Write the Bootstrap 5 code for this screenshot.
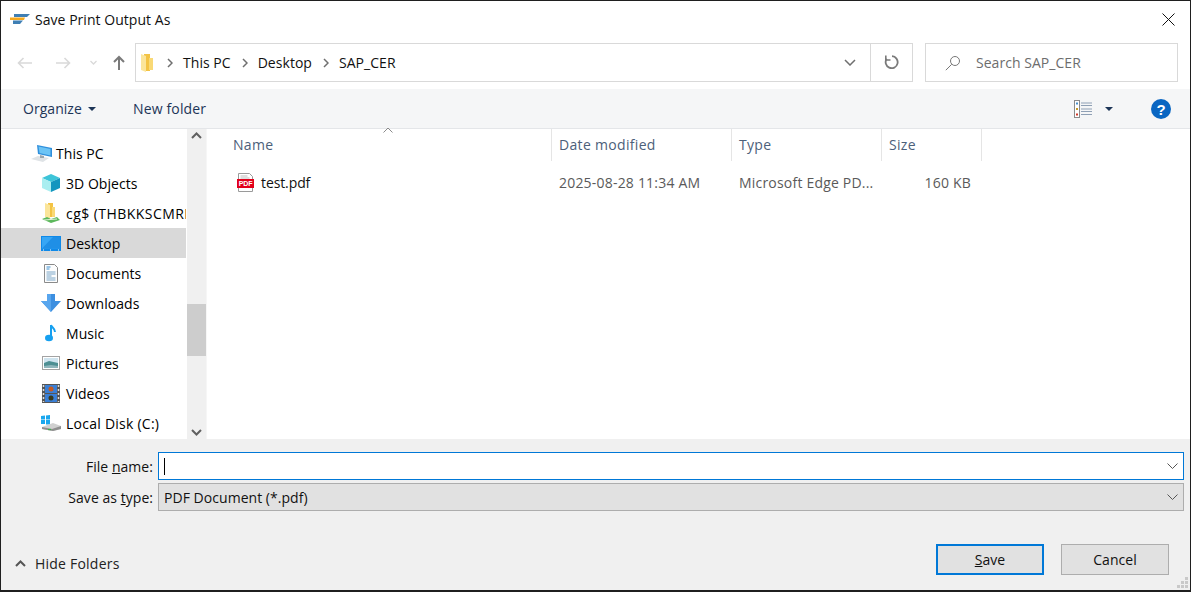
<!doctype html>
<html lang="en">
<head>
<meta charset="utf-8">
<title>Save Print Output As</title>
<link href="https://cdn.jsdelivr.net/npm/bootstrap@5.3.0/dist/css/bootstrap.min.css" rel="stylesheet">
<style>
html,body{height:100%;margin:0;background:#fff;overflow:hidden}
body{font-family:"Open Sans","Noto Sans",sans-serif;font-size:14px;color:#000;letter-spacing:.04px}
.dlg{width:1191px;height:592px;border:1px solid #1f1f1f;border-bottom-width:2px;display:flex;flex-direction:column;overflow:hidden}
.tbar{height:36px;padding-left:9px;flex:none}
.tbar-title{margin-left:5px;font-size:14px;color:#111}
.xbtn{margin-left:auto;margin-right:15px}
.navrow{height:52px;flex:none;padding-top:6px;align-items:flex-start}
.navarrows{width:134px;height:39px;padding-left:16px;flex:none}
.nav-fwd{margin-left:24px}
.nav-dd{margin-left:19px}
.nav-up{margin-left:16px}
.addr{width:778px;height:39px;border:1px solid #d9d9d9;flex:none}
.addr-folder{margin-left:5px;margin-right:14px}
.addr-chev{margin-right:10px}
.addr-txt{margin-right:11px;color:#111}
.addr-end{width:42px;height:37px;border-left:1px solid #d9d9d9;justify-content:center;flex:none}
.addr-dd{width:41px;justify-content:center;flex:none}
.srch{width:253px;height:39px;border:1px solid #d9d9d9;margin-left:12px;padding-left:19px;color:#6d6d6d;flex:none}
.srch span{margin-left:15px}
.cmd{height:40px;flex:none;background:#f5f6f7;border-bottom:1px solid #e4e6e9;padding-left:22px;color:#1d3557}
.cmd-org{width:75px}
.cmd-org i{margin-left:2px}
.cmd-new{margin-left:35px;letter-spacing:.15px}
.cmd-right{margin-left:auto;padding-right:19px}
.view-caret{margin-left:13px;margin-right:38px}
.caret-d{width:0;height:0;border-left:4px solid transparent;border-right:4px solid transparent;border-top:4px solid #1d3557;display:inline-block}
.main{flex:1 1 auto;min-height:0}
.tree{width:185px;margin-right:1px;flex:none;overflow:hidden;padding-top:9px}
.trow{height:30px;padding-left:40px;white-space:nowrap;overflow:hidden}
.trow svg{flex:none;margin-right:5px}
.trow.pc{padding-left:30px}
.trow.pc svg{margin-right:4px}
.trow.sel{background:#d9d9d9}
.wide-txt{letter-spacing:.45px}
.mid-txt{letter-spacing:.25px}
.sbar{width:20px;flex:none;background:#f0f0f0;position:relative;flex-direction:column;justify-content:space-between;padding:3px 0 3px;border-right:1px solid #f6f6f6}
.sthumb{position:absolute;left:0;top:175px;width:19px;height:52px;background:#cdcdcd}
.list{flex:1 1 auto;min-width:0;padding-left:1px}
.lhead{height:32px;color:#4c607a;position:relative;letter-spacing:.32px}
.lcell{height:32px;padding-left:7px;padding-bottom:2px;border-right:1px solid #e5e5e5;flex:none}
.c1{width:344px;padding-left:25px}.c2{width:180px}.c3{width:150px}.c4{width:100px}
.sortmark{position:absolute;left:175px;top:-2px}
.lrow{height:42px;color:#5a5a5a;letter-spacing:.2px}
.lrow .c1,.lrow .c2,.lrow .c3,.lrow .c4{border:0;flex:none;height:42px}
.lrow .c1{padding-left:29px;color:#111;letter-spacing:-.1px}
.lrow .c1 svg{margin-right:7px}
.lrow .c2,.lrow .c3{padding-left:7px}
.lrow .c4{padding:0 11px 0 0;justify-content:flex-end}
.foot{height:151px;flex:none;background:#f0f0f0;position:relative;padding-top:13px}
.frow{height:28px;margin-bottom:3px;padding-right:6px}
.flabel{width:157px;text-align:right;padding-right:5px;flex:none;color:#111}
.fin{flex:1 1 auto;height:28px;background:#fff;border:1px solid #0078d7;padding:0 5px;justify-content:space-between}
.fin.sel{background:#e1e1e1;border-color:#adadad;padding-left:5px;color:#111}
.caretline{width:1px;height:17px;background:#000}
.fbot{position:absolute;left:0;right:0;bottom:15px;height:31px;padding:0 21px 0 14px}
.hidef{margin-top:8px;color:#222;letter-spacing:.22px}
.hidef svg{margin-right:9px}
.actions{margin-left:auto;gap:17px}
.wbtn{width:108px;height:31px;background:#e1e1e1;border:1px solid #adadad;border-radius:0;color:#111;font-size:14px;padding:0;letter-spacing:.04px}
.wbtn.prim{border:2px solid #0078d7}
.grip{position:absolute;right:1px;bottom:1px}
</style>
</head>
<body>
<div class="dlg">
  <div class="tbar d-flex align-items-center">
    <svg width="20" height="10" viewBox="0 0 20 10"><path d="M4 0h16l-3 3H4z" fill="#3f7fb4"/><path d="M0 3.500h15l-1 2.500H0z" fill="#f5a81c"/><path d="M3 6.500h10L10 10H3z" fill="#3f7fb4"/></svg>
    <span class="tbar-title">Save Print Output As</span>
    <svg class="xbtn" width="13" height="13" viewBox="0 0 13 13"><path d="M.5.5l12 12M12.500.5l-12 12" stroke="#111" fill="none"/></svg>
  </div>

  <div class="navrow d-flex">
    <div class="navarrows d-flex align-items-center">
      <svg width="15" height="12" viewBox="0 0 15 12"><path d="M15 6H1.500M6.500 1l-5 5 5 5" stroke="#d9d9d9" stroke-width="1.600" fill="none"/></svg>
      <svg class="nav-fwd" width="15" height="12" viewBox="0 0 15 12"><path d="M0 6h13.500M8.500 1l5 5-5 5" stroke="#d9d9d9" stroke-width="1.600" fill="none"/></svg>
      <svg class="nav-dd" width="7" height="5" viewBox="0 0 7 5"><path d="M.5 1l3 3 3-3" stroke="#d9d9d9" stroke-width="1.300" fill="none"/></svg>
      <svg class="nav-up" width="12" height="15" viewBox="0 0 12 15"><path d="M6 15V2M1 7l5-5 5 5" stroke="#7a7a7a" stroke-width="2" fill="none"/></svg>
    </div>
    <div class="addr d-flex align-items-center">
      <svg class="addr-folder" width="12" height="18" viewBox="0 0 12 18"><path d="M3 0h6v17H3z" fill="#f3c344"/><path d="M0 0l5 2v16l-5-2z" fill="#fbe59a"/><path d="M8 4h4v12H8z" fill="#f9d976"/></svg>
      <svg class="addr-chev" width="6" height="10" viewBox="0 0 6 10"><path d="M1 1l4 4-4 4" stroke="#6f6f6f" stroke-width="1.500" fill="none"/></svg>
      <span class="addr-txt">This PC</span>
      <svg class="addr-chev" width="6" height="10" viewBox="0 0 6 10"><path d="M1 1l4 4-4 4" stroke="#6f6f6f" stroke-width="1.500" fill="none"/></svg>
      <span class="addr-txt">Desktop</span>
      <svg class="addr-chev" width="6" height="10" viewBox="0 0 6 10"><path d="M1 1l4 4-4 4" stroke="#6f6f6f" stroke-width="1.500" fill="none"/></svg>
      <span class="addr-txt">SAP_CER</span>
      <div class="addr-dd d-flex ms-auto align-items-center">
        <svg width="12" height="7" viewBox="0 0 12 7"><path d="M1 1l5 5 5-5" stroke="#6f6f6f" stroke-width="1.500" fill="none"/></svg>
      </div>
      <div class="addr-end d-flex align-items-center">
        <svg width="15" height="15" viewBox="0 0 15 15"><path d="M8 1.200A6 6 0 1 1 2.700 3.800" stroke="#7a7a7a" stroke-width="1.800" fill="none"/><path d="M1.800 .5v4.500h4.700" stroke="#7a7a7a" stroke-width="1.600" fill="none"/></svg>
      </div>
    </div>
    <div class="srch d-flex align-items-center">
      <svg width="16" height="16" viewBox="0 0 16 16"><circle cx="10" cy="6" r="4.500" stroke="#777" fill="none"/><path d="M6.700 9.300L.8 15.200" stroke="#777" fill="none"/></svg>
      <span>Search SAP_CER</span>
    </div>
  </div>

  <div class="cmd d-flex align-items-center">
    <span class="cmd-org d-flex align-items-center gap-1">Organize <i class="caret-d"></i></span>
    <span class="cmd-new">New folder</span>
    <div class="cmd-right d-flex align-items-center">
      <svg width="18" height="18" viewBox="0 0 18 18"><rect x=".5" y=".5" width="5" height="17" fill="#fff" stroke="#8a8a8a"/><rect x="2" y="2.500" width="2" height="2" fill="#4a90c9"/><rect x="2" y="8" width="2" height="2" fill="#c59a2b"/><rect x="2" y="13.500" width="2" height="2" fill="#d23a2a"/><path d="M7 3h11M7 5.500h11M7 9h11M7 11.500h11M7 14.500h11" stroke="#8fa0b5"/></svg>
      <i class="caret-d view-caret"></i>
      <svg width="20" height="20" viewBox="0 0 20 20"><circle cx="10" cy="10" r="10" fill="#0a66c2"/><text x="10" y="15.500" text-anchor="middle" font-family="Liberation Sans, sans-serif" font-weight="700" font-size="15" fill="#fff">?</text></svg>
    </div>
  </div>

  <div class="main d-flex">
    <div class="tree">
      <div class="trow pc d-flex align-items-center">
        <svg width="21" height="17" viewBox="0 0 21 17"><path d="M6 0l15 3v9L7 9z" fill="#2f8fdc"/><path d="M7.500 1.500l12 2.500v6.500L8.500 8z" fill="#6cc4f5"/><path d="M0 14l7-3 11 2-6 4z" fill="#dfe3e6"/><path d="M9 10l4 1v2H9z" fill="#9aa6ae"/></svg>
        <span>This PC</span>
      </div>
      <div class="trow d-flex align-items-center">
        <svg width="20" height="18" viewBox="0 0 20 18"><path d="M10 0l9 4-9 4-9-4z" fill="#3dc4d8"/><path d="M1 4l9 4v10l-9-4z" fill="#aaeef0"/><path d="M19 4l-9 4v10l9-4z" fill="#1496bf"/></svg>
        <span>3D Objects</span>
      </div>
      <div class="trow d-flex align-items-center">
        <svg width="20" height="21" viewBox="0 0 20 21"><path d="M7 0h5v14H7z" fill="#f3c344"/><path d="M4 0l5 2v14l-5-2z" fill="#fbe59a"/><path d="M11 4h3v10h-3z" fill="#f9d976"/><path d="M1 16l5-2 4 2 6-2 3 3-9 3z" fill="#5cb85c"/><path d="M3 17l13-1" stroke="#dff0d8"/></svg>
        <span class="wide-txt">cg$ (THBKKSCMRI</span>
      </div>
      <div class="trow sel d-flex align-items-center">
        <svg width="20" height="15" viewBox="0 0 20 15"><rect width="20" height="15" fill="#0f89e8"/><rect x="1" y="1" width="18" height="11.500" fill="#36a6f5"/><path d="M1 12.500L12 1h7v11.500z" fill="#1f8fe6"/><path d="M2 14h1M9 14h1M17 14h1" stroke="#fff"/></svg>
        <span>Desktop</span>
      </div>
      <div class="trow d-flex align-items-center">
        <svg width="20" height="19" viewBox="0 0 20 19"><path d="M3.500.5h10l3 3v15h-13z" fill="#fdfdfd" stroke="#8a8a8a"/><path d="M5.500 3h4M5.500 5h3" stroke="#3a8fd0"/><path d="M5.500 8h9M5.500 10h9M5.500 12h5M5.500 14h9M5.500 16h9" stroke="#7aa6c8"/></svg>
        <span>Documents</span>
      </div>
      <div class="trow d-flex align-items-center">
        <svg width="20" height="18" viewBox="0 0 20 18"><path d="M6 0h8v7h6L10 18 0 7h6z" fill="#3d8fe0"/><path d="M6 0h4v18L0 7h6z" fill="#58a6ee"/></svg>
        <span>Downloads</span>
      </div>
      <div class="trow d-flex align-items-center">
        <svg width="20" height="18" viewBox="0 0 20 18"><path d="M10 1v12" stroke="#16a0f0" stroke-width="2" fill="none"/><ellipse cx="8" cy="14" rx="4" ry="3.200" fill="#16a0f0"/><path d="M10 1c1 3 4 3 4 7" stroke="#16a0f0" stroke-width="2" fill="none"/></svg>
        <span>Music</span>
      </div>
      <div class="trow d-flex align-items-center">
        <svg width="20" height="14" viewBox="-1 0 20 14"><rect x=".5" y=".5" width="17" height="13" fill="#fff" stroke="#a3a3a3"/><rect x="2" y="2" width="14" height="10" fill="#cfe4ef"/><path d="M2 7l5-2 9 2v5H2z" fill="#4d8f93"/><path d="M2 10l7-1 7 1v2H2z" fill="#8fb6bc"/></svg>
        <span>Pictures</span>
      </div>
      <div class="trow d-flex align-items-center">
        <svg width="20" height="19" viewBox="-1 0 20 19"><rect width="18" height="19" fill="#555"/><rect x="3" y="1" width="12" height="8" fill="#3a7fd5"/><rect x="3" y="10" width="12" height="8" fill="#3a7fd5"/><circle cx="9" cy="5" r="2.500" fill="#c45a22"/><circle cx="9" cy="14" r="2.500" fill="#3a3a1a"/><path d="M1.500 1v17M16.500 1v17" stroke="#ddd" stroke-dasharray="2 2" stroke-width="1.500"/></svg>
        <span>Videos</span>
      </div>
      <div class="trow d-flex align-items-center">
        <svg width="20" height="16" viewBox="0 0 20 16"><path d="M0 1l4-.5v4H0zM5 .4L9 0v4.500H5zM0 5h4v4H0zM5 5h4v4.500H5z" fill="#1aa7ee"/><path d="M1 12l11-4 8 3v3l-8 2-11-2z" fill="#d0d0d0"/><path d="M1 12l10 2 9-3v3l-8 2-11-2z" fill="#8f8f8f"/><path d="M7 14.500h3" stroke="#3ab54a" stroke-width="1.200"/></svg>
        <span class="mid-txt">Local Disk (C:)</span>
      </div>
    </div>
    <div class="sbar d-flex align-items-center">
      <svg width="11" height="7" viewBox="0 0 11 7"><path d="M1 6l4.500-4.500L10 6" stroke="#606060" stroke-width="2" fill="none"/></svg>
      <div class="sthumb"></div>
      <svg width="11" height="7" viewBox="0 0 11 7"><path d="M1 1l4.500 4.500L10 1" stroke="#606060" stroke-width="2" fill="none"/></svg>
    </div>
    <div class="list">
      <div class="lhead d-flex">
        <svg class="sortmark" width="10" height="6" viewBox="0 0 10 6"><path d="M.5 5.500L5 1l4.500 4.500" stroke="#8a8a8a" fill="none"/></svg>
        <div class="lcell c1 d-flex align-items-center">Name</div>
        <div class="lcell c2 d-flex align-items-center">Date modified</div>
        <div class="lcell c3 d-flex align-items-center">Type</div>
        <div class="lcell c4 d-flex align-items-center">Size</div>
      </div>
      <div class="lrow d-flex align-items-center">
        <div class="c1 d-flex align-items-center">
          <svg width="17" height="19" viewBox="0 0 17 19"><path d="M1.500.5h11l3 3v15h-14z" fill="#fff" stroke="#9a9a9a"/><path d="M3.500 3h7M3.500 5h9" stroke="#bdbdbd"/><rect y="6" width="17" height="9" fill="#e2001a"/><text x="8.500" y="13.300" text-anchor="middle" font-family="Liberation Sans, sans-serif" font-weight="700" font-size="7" fill="#fff">PDF</text></svg>
          <span>test.pdf</span>
        </div>
        <div class="c2 d-flex align-items-center">2025-08-28 11:34 AM</div>
        <div class="c3 d-flex align-items-center">Microsoft Edge PD...</div>
        <div class="c4 d-flex align-items-center">160 KB</div>
      </div>
    </div>
  </div>

  <div class="foot">
    <div class="frow d-flex align-items-center">
      <span class="flabel">File <u>n</u>ame:</span>
      <div class="fin d-flex align-items-center">
        <i class="caretline"></i>
        <svg width="11" height="6" viewBox="0 0 11 6"><path d="M.5.5l5 5 5-5" stroke="#555" fill="none"/></svg>
      </div>
    </div>
    <div class="frow d-flex align-items-center">
      <span class="flabel">Save as <u>t</u>ype:</span>
      <div class="fin sel d-flex align-items-center">
        <span>PDF Document (*.pdf)</span>
        <svg width="11" height="6" viewBox="0 0 11 6"><path d="M.5.5l5 5 5-5" stroke="#555" fill="none"/></svg>
      </div>
    </div>
    <div class="fbot d-flex align-items-center">
      <span class="hidef d-flex align-items-center">
        <svg width="11" height="7" viewBox="0 0 11 7"><path d="M1 6l4.500-4.500L10 6" stroke="#555" stroke-width="2" fill="none"/></svg>
        Hide Folders
      </span>
      <div class="actions d-flex">
        <button type="button" class="btn wbtn prim"><u>S</u>ave</button>
        <button type="button" class="btn wbtn">Cancel</button>
      </div>
    </div>
    <svg class="grip" width="12" height="12" viewBox="0 0 12 12"><path d="M8 0h3v3H8zM4 4h3v3H4zM8 4h3v3H8zM0 8h3v3H0zM4 8h3v3H4zM8 8h3v3H8z" fill="#c9c9c9"/></svg>
  </div>
</div>
</body>
</html>
